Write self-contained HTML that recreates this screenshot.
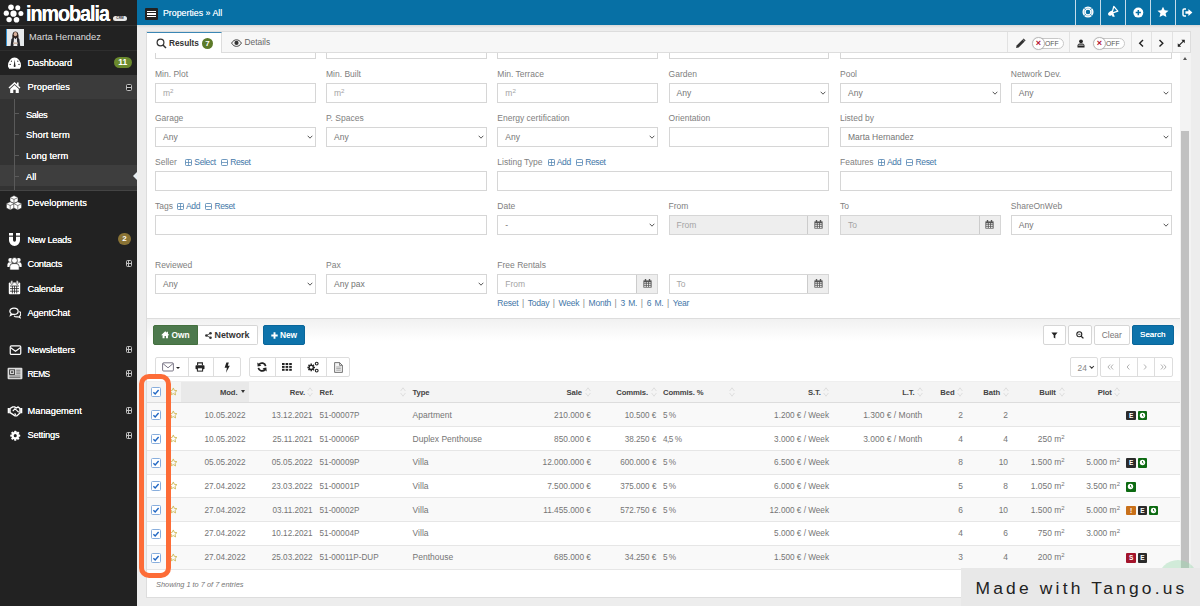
<!DOCTYPE html>
<html><head><meta charset="utf-8">
<style>
*{box-sizing:border-box;margin:0;padding:0}
html,body{width:1200px;height:606px;overflow:hidden}
body{font-family:"Liberation Sans",sans-serif;font-size:9px;color:#666;background:#ededed;position:relative}
.abs{position:absolute}
#side{position:absolute;left:0;top:0;width:137px;height:606px;background:#222}
#top{position:absolute;left:137px;top:0;width:1063px;height:25px;background:#0770a5}
#panel{position:absolute;left:146px;top:31px;width:1045px;height:567px;background:#fff;border:1px solid #ddd}
#tabs{position:absolute;left:0;top:0;width:1043px;height:21px;background:#f7f7f7;border-bottom:1px solid #ddd}
.lbl{position:absolute;font-size:8.5px;color:#808080;white-space:nowrap;line-height:10px}
.inp{position:absolute;height:20px;border:1px solid #d6d6d6;background:#fff;font-size:8.5px;color:#747474;line-height:18px;padding-left:7px;white-space:nowrap}
.inp.ph{color:#a4a4a4}
.inp.dis{background:#eee}
a,.lnk{color:#3f77a8;text-decoration:none;letter-spacing:-.25px}

.mi{position:absolute;left:0;width:137px;height:24px;color:#fff;font-size:9.3px;line-height:25px;white-space:nowrap}
.mi .t{position:absolute;left:27.5px;top:0;text-shadow:0 0 .4px #fff}
.mi svg{position:absolute}
.sub{position:absolute;left:26px;color:#fff;font-size:9.4px;line-height:12px;white-space:nowrap;text-shadow:0 0 .4px #fff}
.tick{position:absolute;left:14px;width:5px;height:1px;background:#5a5a5a}
.exp{position:absolute;left:125.5px;width:6.4px;height:6.4px;border:1px solid #c0c0c0;border-radius:1.5px;background:#222;margin-top:.4px}
.exp:before{content:"";position:absolute;left:0;top:1.7px;width:4.4px;height:1px;background:#c0c0c0}
.exp.plus:after{content:"";position:absolute;left:1.7px;top:0;width:1px;height:4.4px;background:#c0c0c0}

.tsep{top:0;width:1px;height:25px;background:#c4dcea;box-shadow:0 0 .5px #c4dcea}
.tab{position:absolute;top:0;height:21px;white-space:nowrap}
.tdiv{position:absolute;top:0;width:1px;height:20px;background:#e2e2e2}

.sw{top:5.7px;width:31px;height:11px;border:1px solid #c8c8c8;border-radius:6px;background:#fff}
.knob{top:4.7px;width:13px;height:13px;border:1px solid #bbb;border-radius:7px;background:#fff;box-shadow:0 0 1px rgba(0,0,0,.2)}
.knob:after{content:"×";position:absolute;left:0;top:0;width:11px;height:11px;text-align:center;line-height:10.5px;font-size:9px;font-weight:bold;color:#b01030}
.swt{top:5.7px;font-size:6.8px;line-height:11px;color:#555}

#form{position:absolute;left:0;top:0;width:1200px;height:606px}
.lbl sup,.inp sup{font-size:6.2px;line-height:0;vertical-align:3px}
.lk{color:#3f77a8;letter-spacing:-.36px}
.lk svg{margin-right:2px;vertical-align:-0.6px}
.lk i{display:inline-block;position:relative;width:6.5px;height:6.5px;border:1px solid #3f77a8;border-radius:1px;margin-right:2.5px;vertical-align:-0.5px}
.lk i:before{content:"";position:absolute;left:.75px;top:1.75px;width:3px;height:1px;background:#3f77a8}
.lk i.pl:after{content:"";position:absolute;left:1.75px;top:.75px;width:1px;height:3px;background:#3f77a8}
.chev{position:absolute;right:2px;top:6.9px}
.cal{position:absolute;right:0;top:0;width:21px;height:18px;background:#eee;border-left:1px solid #ccc;text-align:center;line-height:17px}
.cal svg{vertical-align:middle}

.btn{position:absolute;border:1px solid #d6d6d6;border-radius:2px;font-size:8.4px;line-height:18px;text-align:center;white-space:nowrap;display:flex;align-items:center;justify-content:center}
.grp{position:absolute;border:1px solid #ddd;border-radius:2px;background:#fff}
.gd{position:absolute;top:358px;width:1px;height:17.5px;background:#ddd}
.th{position:absolute;font-size:7.7px;letter-spacing:-.1px;line-height:11px;font-weight:bold;color:#444;white-space:nowrap}
.td{position:absolute;font-size:8.6px;line-height:11px;color:#757575;white-space:nowrap}
.td sup{font-size:6px;line-height:0;vertical-align:3px}
.cb{position:absolute;left:151px;width:10px;height:10px;border:1px solid #88aedd;border-radius:1.5px;background:#fff}
.cb svg{position:absolute;left:0;top:0}
.tg{position:absolute;width:9.5px;height:9.5px;border-radius:1px;color:#fff;font-size:6.5px;font-weight:bold;line-height:9px;text-align:center}
</style></head><body>

<div id="side">
 <!-- logo -->
 <svg class="abs" style="left:3px;top:4px" width="21" height="19" viewBox="0 0 21 19"><g fill="#fff"><circle cx="8" cy="3.2" r="2.8"/><circle cx="14.8" cy="3.7" r="2.5"/><circle cx="3.3" cy="9.2" r="2.6"/><circle cx="10.5" cy="9.7" r="3.1"/><circle cx="17.9" cy="9.5" r="2.5"/><circle cx="6.1" cy="15.6" r="2.7"/><circle cx="13.5" cy="15.8" r="2.8"/></g></svg>
 <div class="abs" style="left:26px;top:1.9px;font-size:22.5px;line-height:23px;font-weight:bold;color:#fff;letter-spacing:-1.2px;transform:scaleX(.88);transform-origin:0 0;text-shadow:0 0 .6px #fff">inmobalia</div>
 <div class="abs" style="left:113px;top:15.5px;width:14px;height:5px;border-radius:2.5px;background:#e8e8e8;color:#333;font-size:3.2px;line-height:5px;text-align:center;font-weight:bold">CRM</div>
 <div class="abs" style="left:0;top:25px;width:137px;height:1px;background:#333"></div>
 <!-- user -->
 <div class="abs" style="left:6px;top:29px;width:18px;height:17px;background:#e6e9eb;border-left:1.6px solid #2f8fcf;overflow:hidden">
   <svg class="abs" style="left:0;top:0" width="17" height="17" viewBox="0 0 17 17"><path d="M5.4 9.5C5 6 5.6 2.6 8.4 2.6S11.8 6 11.4 9.5Z" fill="#2e211c"/><ellipse cx="8.4" cy="5.2" rx="1.7" ry="2.1" fill="#d8b09a"/><path d="M3.6 17L4.4 10.4C4.8 8.8 6.4 8.4 8.4 8.4S12 8.8 12.4 10.4L13.2 17Z" fill="#26262b"/><path d="M7 8.6L8.4 10.2L9.8 8.6L10.4 17H6.4Z" fill="#ececec"/><rect x="6.2" y="13.4" width="4.4" height="1.6" fill="#cdb7a8"/></svg>
 </div>
 <div class="abs" style="left:29px;top:31px;color:#ddd;font-size:9.3px;line-height:12px;white-space:nowrap">Marta Hernandez</div>
 <div class="abs" style="left:0;top:50px;width:137px;height:1px;background:#2e2e2e"></div>
 <!-- properties block -->
 <div class="abs" style="left:0;top:75px;width:137px;height:24px;background:#3b3b3b"></div>
 <div class="abs" style="left:0;top:99px;width:137px;height:92px;background:#333"></div>
 <div class="abs" style="left:0;top:165px;width:137px;height:21px;background:#3e3e3e"></div>
 <div class="abs" style="left:14px;top:99px;width:1px;height:91px;background:#5a5a5a"></div>
 <div class="abs" style="left:0;top:190px;width:137px;height:1px;background:#444"></div>
 <div class="tick" style="top:113px"></div><div class="tick" style="top:134px"></div><div class="tick" style="top:155px"></div><div class="tick" style="top:176px"></div>
 <div class="sub" style="top:108.8px;letter-spacing:-.45px">Sales</div>
 <div class="sub" style="top:129px">Short term</div>
 <div class="sub" style="top:149.8px">Long term</div>
 <div class="sub" style="top:170.6px">All</div>
 <div class="abs" style="left:133px;top:172px;width:0;height:0;border-top:4px solid transparent;border-bottom:4px solid transparent;border-right:4px solid #e8eef2"></div>

 <div class="mi" style="top:51px"><span class="t" style="letter-spacing:-0.1px">Dashboard</span></div>
 <div class="abs" style="left:114px;top:57px;width:17.5px;height:11px;border-radius:5.5px;background:#6b8a2e;color:#fff;font-size:8.5px;font-weight:bold;line-height:11px;text-align:center">11</div>
 <div class="mi" style="top:75px"><span class="t">Properties</span></div>
 <div class="exp" style="top:84px"></div>
 <div class="mi" style="top:191px"><span class="t">Developments</span></div>
 <div class="mi" style="top:227.5px"><span class="t" style="letter-spacing:-0.3px">New Leads</span></div>
 <div class="abs" style="left:118px;top:233px;width:13px;height:12px;border-radius:6px;background:#8a7335;color:#fff;font-size:8px;font-weight:bold;line-height:12px;text-align:center">2</div>
 <div class="mi" style="top:252px"><span class="t" style="letter-spacing:-0.27px">Contacts</span></div>
 <div class="exp plus" style="top:260px"></div>
 <div class="mi" style="top:277px"><span class="t" style="letter-spacing:-0.22px">Calendar</span></div>
 <div class="mi" style="top:301px"><span class="t" style="letter-spacing:-0.16px">AgentChat</span></div>
 <div class="mi" style="top:338px"><span class="t" style="letter-spacing:-0.1px">Newsletters</span></div>
 <div class="exp plus" style="top:346px"></div>
 <div class="mi" style="top:362px"><span class="t" style="letter-spacing:-0.5px;font-size:8.4px">REMS</span></div>
 <div class="exp plus" style="top:370px"></div>
 <div class="mi" style="top:399px"><span class="t">Management</span></div>
 <div class="exp plus" style="top:407px"></div>
 <div class="mi" style="top:423px"><span class="t" style="letter-spacing:-0.22px">Settings</span></div>
 <div class="exp plus" style="top:432px"></div>

 <!-- dashboard -->
 <svg class="abs" style="left:7px;top:56px" width="15" height="14" viewBox="0 0 15 14"><path d="M1 9.6A6.5 8 0 0 1 14 9.6V10.6L12.8 12.8H2.2L1 10.6Z" fill="#fff"/><path d="M7.7 3.6L8.4 9.6H6.8Z" fill="#222"/><circle cx="7.6" cy="10" r="1" fill="#222"/><circle cx="3.2" cy="8.4" r=".65" fill="#222"/><circle cx="12" cy="8.4" r=".65" fill="#222"/><circle cx="4.4" cy="5.2" r=".6" fill="#222"/><circle cx="10.8" cy="5.2" r=".6" fill="#222"/></svg>
 <!-- home -->
 <svg class="abs" style="left:8px;top:81px" width="13" height="13" viewBox="0 0 13 13"><path d="M6.5 1L0.5 6.6L1.5 7.6L6.5 3L11.5 7.6L12.5 6.6L10.6 4.8V1.6H9V3.3Z" fill="#fff"/><path d="M6.5 4L2.2 7.9V12H5.3V8.8H7.7V12H10.8V7.9Z" fill="#fff"/></svg>
 <!-- developments cubes -->
 <svg class="abs" style="left:6px;top:195px" width="16" height="16" viewBox="0 0 16 16"><g fill="#fff" stroke="#222" stroke-width=".5"><path d="M8 .6L12 2.4V6.6L8 8.4L4 6.6V2.4Z"/><path d="M4.2 6.8L8.2 8.6V13L4.2 15L.4 13V8.6Z"/><path d="M11.8 6.8L15.6 8.6V13L11.8 15L7.8 13V8.6Z"/></g><g stroke="#222" stroke-width=".55" fill="none"><path d="M4.4 2.8L8 4.4L11.6 2.8M8 4.4V8"/><path d="M.8 8.9L4.2 10.5L7.8 8.9M4.2 10.5V14.6"/><path d="M8.2 8.9L11.8 10.5L15.2 8.9M11.8 10.5V14.6"/></g></svg>
 <!-- magnet -->
 <svg class="abs" style="left:8px;top:232px" width="13" height="15" viewBox="0 0 13 15"><path d="M1 1H5V8A1.5 1.8 0 0 0 8 8V1H12V8.2A5.5 5.8 0 0 1 1 8.2Z" fill="#fff"/><rect x="1" y="3.6" width="4" height="1.1" fill="#222"/><rect x="8" y="3.6" width="4" height="1.1" fill="#222"/></svg>
 <!-- contacts -->
 <svg class="abs" style="left:7px;top:256px" width="15" height="15" viewBox="0 0 15 15"><g fill="#fff"><circle cx="3.4" cy="4" r="2.1"/><circle cx="11.6" cy="4" r="2.1"/><path d="M0.4 11V8.4A2.4 2.4 0 0 1 2.8 6.2H5L4 11Z"/><path d="M14.6 11V8.4A2.4 2.4 0 0 0 12.2 6.2H10L11 11Z"/></g><circle cx="7.5" cy="4.4" r="2.9" fill="#fff" stroke="#222" stroke-width=".7"/><path d="M2.8 14V10.4A3 3 0 0 1 5.8 7.6H9.2A3 3 0 0 1 12.2 10.4V14Z" fill="#fff" stroke="#222" stroke-width=".7"/></svg>
 <!-- calendar -->
 <svg class="abs" style="left:8px;top:280px" width="13" height="15" viewBox="0 0 13 15"><rect x=".8" y="2.6" width="11.4" height="11.6" rx="1" fill="#fff"/><rect x="2.8" y=".6" width="2" height="3.8" rx="1" fill="#fff" stroke="#222" stroke-width=".6"/><rect x="8.2" y=".6" width="2" height="3.8" rx="1" fill="#fff" stroke="#222" stroke-width=".6"/><g stroke="#222" stroke-width=".8"><path d="M2 6H11M2 8.6H11M2 11.2H11M4.4 6V13.4M6.5 6V13.4M8.7 6V13.4"/></g></svg>
 <!-- chat -->
 <svg class="abs" style="left:8.5px;top:307px" width="12.5" height="11.7" viewBox="0 0 15 14"><path d="M6 1.2C9 1.2 11 2.8 11 5C11 7.2 9 8.8 6 8.8C5.4 8.8 4.9 8.7 4.4 8.6L1.8 10L2.6 7.8C1.6 7.1 1 6.1 1 5C1 2.8 3 1.2 6 1.2Z" fill="none" stroke="#fff" stroke-width="1.5"/><path d="M12.4 5.4C13.6 6.1 14.2 7 14.2 8.2C14.2 9.3 13.6 10.2 12.7 10.9L13.4 12.9L11 11.7C10.5 11.8 10 11.9 9.4 11.9C8 11.9 6.8 11.5 6 10.6" fill="none" stroke="#fff" stroke-width="1.4"/></svg>
 <!-- envelope -->
 <svg class="abs" style="left:8.5px;top:345px" width="13" height="10.5" viewBox="0 0 15 13"><rect x="1" y="1.2" width="13" height="10.4" rx="1.4" fill="none" stroke="#fff" stroke-width="1.5"/><path d="M1.6 3.4L7.5 7.8L13.4 3.4" fill="none" stroke="#fff" stroke-width="1.4"/></svg>
 <!-- rems -->
 <svg class="abs" style="left:7px;top:367px" width="16" height="13" viewBox="0 0 16 13"><rect x=".6" y=".8" width="14.8" height="11.4" rx="1" fill="#ddd"/><rect x="2.6" y="2.8" width="5" height="4.6" fill="none" stroke="#333" stroke-width=".9"/><rect x="4" y="4.2" width="2.2" height="1.8" fill="#555"/><path d="M9.2 3.2H13.4M9.2 5H13.4M9.2 6.8H13.4M2.4 9H13.4M2.4 10.6H13.4" stroke="#555" stroke-width=".8"/></svg>
 <!-- handshake -->
 <svg class="abs" style="left:7px;top:404px" width="16" height="13.5" viewBox="0 0 17 15"><path d="M.4 4.4H2.6V10.4H.4ZM14.4 4.4H16.6V10.4H14.4Z" fill="#fff"/><path d="M3 5L6 3.2H8L10 4.4L12 3.2L14 5V10L10.6 13.2H8.6L3 9.6Z" fill="none" stroke="#fff" stroke-width="1.5" stroke-linejoin="round"/><path d="M6 8L8.4 5.4L10.8 7.4L12.6 9.2M8 10.6L9.6 12" fill="none" stroke="#fff" stroke-width="1.3"/></svg>
 <!-- gear -->
 <svg class="abs" style="left:10px;top:430px" width="10.5" height="11.3" viewBox="-6.5 -7 13 14"><g fill="#fff"><circle r="4.4"/><g id="gt"><rect x="-1.4" y="-6.2" width="2.8" height="12.4" rx=".6"/></g><use href="#gt" transform="rotate(45)"/><use href="#gt" transform="rotate(90)"/><use href="#gt" transform="rotate(135)"/></g><circle r="1.9" fill="#222"/></svg>

</div>

<div id="top">
 <div class="abs" style="left:7.5px;top:8px;width:13px;height:12px;background:#222;border-radius:1px"></div>
 <div class="abs" style="left:9.5px;top:10.5px;width:9px;height:1.6px;background:#fff"></div>
 <div class="abs" style="left:9.5px;top:13.2px;width:9px;height:1.6px;background:#fff"></div>
 <div class="abs" style="left:9.5px;top:15.9px;width:9px;height:1.6px;background:#fff"></div>
 <div class="abs" style="left:26px;top:7px;font-size:8.8px;line-height:12px;color:#e6f2fa;white-space:nowrap;text-shadow:0 0 .4px #e6f2fa">Properties » All</div>
 <!-- right icons -->
 <div class="abs tsep" style="left:938px"></div><div class="abs tsep" style="left:963px"></div><div class="abs tsep" style="left:988px"></div><div class="abs tsep" style="left:1013px"></div><div class="abs tsep" style="left:1038px"></div>
 <svg class="abs" style="left:945px;top:6px" width="12" height="12" viewBox="0 0 12 12"><circle cx="6" cy="6" r="3.9" fill="none" stroke="#fff" stroke-width="3.3"/><circle cx="6" cy="6" r="3.9" fill="none" stroke="#0770a5" stroke-width=".5" opacity=".7"/><g stroke="#0770a5" stroke-width=".7" opacity=".8"><path d="M2 2L4.2 4.2M10 2L7.8 4.2M2 10L4.2 7.8M10 10L7.8 7.8"/></g></svg>
 <svg class="abs" style="left:970px;top:5px" width="13" height="13" viewBox="0 0 13 13"><path d="M6.8 1.4L10.8 6.2L5 8.2Z" fill="none" stroke="#fff" stroke-width="1.3" stroke-linejoin="round"/><path d="M4.6 5.4L6.6 8.8L4.2 10.4C3 11.1 1.6 10.8 1.2 9.7C.8 8.6 1.4 7.6 2.6 6.8Z" fill="#fff"/><path d="M4.4 9L5.6 11.8H7.8L6.6 8.6Z" fill="#fff"/></svg>
 <svg class="abs" style="left:995px;top:6.5px" width="12" height="12" viewBox="0 0 12 12"><circle cx="6.3" cy="5.6" r="5" fill="#fff"/><path d="M6.3 3V8.2M3.7 5.6H8.9" stroke="#0770a5" stroke-width="1.5"/></svg>
 <svg class="abs" style="left:1020px;top:6px" width="12" height="12" viewBox="0 0 13 13"><path d="M6.5 .8L8.3 4.7L12.5 5.1L9.3 7.9L10.2 12L6.5 9.9L2.8 12L3.7 7.9L.5 5.1L4.7 4.7Z" fill="#fff"/></svg>
 <svg class="abs" style="left:1045px;top:8px" width="11" height="9" viewBox="0 0 11 9"><path d="M4 1H2.2A1.2 1.2 0 0 0 1 2.2V6.8A1.2 1.2 0 0 0 2.2 8H4" fill="none" stroke="#fff" stroke-width="1.5"/><path d="M3.4 3.2H6.4V1L10.4 4.5L6.4 8V5.8H3.4Z" fill="#fff"/></svg>
</div>
<div class="abs" style="left:137px;top:25px;width:1063px;height:3px;background:linear-gradient(#d8d8d8,#ededed)"></div>
<div id="panel"></div>
<div id="form">
<div class="inp " style="left:155px;top:39px;width:160.8px"></div>
<div class="inp " style="left:326px;top:39px;width:160.8px"></div>
<div class="inp " style="left:497.3px;top:39px;width:160.8px"></div>
<div class="inp " style="left:668.6px;top:39px;width:160.8px"></div>
<div class="inp " style="left:840px;top:39px;width:331.6px"></div>
<div class="lbl" style="left:155px;top:69px">Min. Plot</div>
<div class="lbl" style="left:326px;top:69px">Min. Built</div>
<div class="lbl" style="left:497.3px;top:69px">Min. Terrace</div>
<div class="lbl" style="left:668.6px;top:69px">Garden</div>
<div class="lbl" style="left:840px;top:69px">Pool</div>
<div class="lbl" style="left:1010.8px;top:69px">Network Dev.</div>
<div class="inp ph" style="left:155px;top:83px;width:160.8px">m<sup>2</sup></div>
<div class="inp ph" style="left:326px;top:83px;width:160.8px">m<sup>2</sup></div>
<div class="inp ph" style="left:497.3px;top:83px;width:160.8px">m<sup>2</sup></div>
<div class="inp " style="left:668.6px;top:83px;width:160.8px">Any<svg class="chev" width="6" height="4.3" viewBox="0 0 7 5"><path d="M.8 .9L3.5 3.7L6.2 .9" fill="none" stroke="#444" stroke-width="1.05"/></svg></div>
<div class="inp " style="left:840px;top:83px;width:160.8px">Any<svg class="chev" width="6" height="4.3" viewBox="0 0 7 5"><path d="M.8 .9L3.5 3.7L6.2 .9" fill="none" stroke="#444" stroke-width="1.05"/></svg></div>
<div class="inp " style="left:1010.8px;top:83px;width:160.8px">Any<svg class="chev" width="6" height="4.3" viewBox="0 0 7 5"><path d="M.8 .9L3.5 3.7L6.2 .9" fill="none" stroke="#444" stroke-width="1.05"/></svg></div>
<div class="lbl" style="left:155px;top:113px">Garage</div>
<div class="lbl" style="left:326px;top:113px">P. Spaces</div>
<div class="lbl" style="left:497.3px;top:113px">Energy certification</div>
<div class="lbl" style="left:668.6px;top:113px">Orientation</div>
<div class="lbl" style="left:840px;top:113px">Listed by</div>
<div class="inp " style="left:155px;top:127px;width:160.8px">Any<svg class="chev" width="6" height="4.3" viewBox="0 0 7 5"><path d="M.8 .9L3.5 3.7L6.2 .9" fill="none" stroke="#444" stroke-width="1.05"/></svg></div>
<div class="inp " style="left:326px;top:127px;width:160.8px">Any<svg class="chev" width="6" height="4.3" viewBox="0 0 7 5"><path d="M.8 .9L3.5 3.7L6.2 .9" fill="none" stroke="#444" stroke-width="1.05"/></svg></div>
<div class="inp " style="left:497.3px;top:127px;width:160.8px">Any<svg class="chev" width="6" height="4.3" viewBox="0 0 7 5"><path d="M.8 .9L3.5 3.7L6.2 .9" fill="none" stroke="#444" stroke-width="1.05"/></svg></div>
<div class="inp " style="left:668.6px;top:127px;width:160.8px"></div>
<div class="inp " style="left:840px;top:127px;width:331.6px">Marta Hernandez<svg class="chev" width="6" height="4.3" viewBox="0 0 7 5"><path d="M.8 .9L3.5 3.7L6.2 .9" fill="none" stroke="#444" stroke-width="1.05"/></svg></div>
<div class="lbl" style="left:155px;top:157px">Seller<span class="lk" style="margin-left:8.6px"><svg width="7" height="7" viewBox="0 0 7 7"><rect x=".5" y=".5" width="6" height="6" rx=".8" fill="none" stroke="#5587b3" stroke-width=".85"/><path d="M.8 3.5H6.2" stroke="#5587b3" stroke-width=".75"/><path d="M3.5 .8V6.2" stroke="#5587b3" stroke-width=".75"/></svg>Select</span><span class="lk" style="margin-left:5.4px"><svg width="7" height="7" viewBox="0 0 7 7"><rect x=".5" y=".5" width="6" height="6" rx=".8" fill="none" stroke="#5587b3" stroke-width=".85"/><path d="M.8 3.5H6.2" stroke="#5587b3" stroke-width=".75"/></svg>Reset</span></div>
<div class="lbl" style="left:497.3px;top:157px">Listing Type<span class="lk" style="margin-left:5.2px"><svg width="7" height="7" viewBox="0 0 7 7"><rect x=".5" y=".5" width="6" height="6" rx=".8" fill="none" stroke="#5587b3" stroke-width=".85"/><path d="M.8 3.5H6.2" stroke="#5587b3" stroke-width=".75"/><path d="M3.5 .8V6.2" stroke="#5587b3" stroke-width=".75"/></svg>Add</span><span class="lk" style="margin-left:5.4px"><svg width="7" height="7" viewBox="0 0 7 7"><rect x=".5" y=".5" width="6" height="6" rx=".8" fill="none" stroke="#5587b3" stroke-width=".85"/><path d="M.8 3.5H6.2" stroke="#5587b3" stroke-width=".75"/></svg>Reset</span></div>
<div class="lbl" style="left:840px;top:157px">Features<span class="lk" style="margin-left:4.5px"><svg width="7" height="7" viewBox="0 0 7 7"><rect x=".5" y=".5" width="6" height="6" rx=".8" fill="none" stroke="#5587b3" stroke-width=".85"/><path d="M.8 3.5H6.2" stroke="#5587b3" stroke-width=".75"/><path d="M3.5 .8V6.2" stroke="#5587b3" stroke-width=".75"/></svg>Add</span><span class="lk" style="margin-left:5.4px"><svg width="7" height="7" viewBox="0 0 7 7"><rect x=".5" y=".5" width="6" height="6" rx=".8" fill="none" stroke="#5587b3" stroke-width=".85"/><path d="M.8 3.5H6.2" stroke="#5587b3" stroke-width=".75"/></svg>Reset</span></div>
<div class="inp " style="left:155px;top:171px;width:331.8px"></div>
<div class="inp " style="left:497.3px;top:171px;width:332.1px"></div>
<div class="inp " style="left:840px;top:171px;width:331.6px"></div>
<div class="lbl" style="left:155px;top:201px">Tags<span class="lk" style="margin-left:4px"><svg width="7" height="7" viewBox="0 0 7 7"><rect x=".5" y=".5" width="6" height="6" rx=".8" fill="none" stroke="#5587b3" stroke-width=".85"/><path d="M.8 3.5H6.2" stroke="#5587b3" stroke-width=".75"/><path d="M3.5 .8V6.2" stroke="#5587b3" stroke-width=".75"/></svg>Add</span><span class="lk" style="margin-left:5.4px"><svg width="7" height="7" viewBox="0 0 7 7"><rect x=".5" y=".5" width="6" height="6" rx=".8" fill="none" stroke="#5587b3" stroke-width=".85"/><path d="M.8 3.5H6.2" stroke="#5587b3" stroke-width=".75"/></svg>Reset</span></div>
<div class="lbl" style="left:497.3px;top:201px">Date</div>
<div class="lbl" style="left:668.6px;top:201px">From</div>
<div class="lbl" style="left:840px;top:201px">To</div>
<div class="lbl" style="left:1010.8px;top:201px">ShareOnWeb</div>
<div class="inp " style="left:155px;top:215px;width:331.8px"></div>
<div class="inp " style="left:497.3px;top:215px;width:160.8px">-<svg class="chev" width="6" height="4.3" viewBox="0 0 7 5"><path d="M.8 .9L3.5 3.7L6.2 .9" fill="none" stroke="#444" stroke-width="1.05"/></svg></div>
<div class="inp ph dis" style="left:668.6px;top:215px;width:160.8px">From<span class="cal"><svg width="9" height="9" viewBox="0 0 9 9"><rect x=".4" y="1.4" width="8.2" height="7.2" fill="#555"/><rect x="1.8" y="0" width="1.4" height="2.4" fill="#555"/><rect x="5.8" y="0" width="1.4" height="2.4" fill="#555"/><g fill="#eee"><rect x="1.3" y="3.2" width="1.5" height="1.2"/><rect x="3.7" y="3.2" width="1.5" height="1.2"/><rect x="6.1" y="3.2" width="1.5" height="1.2"/><rect x="1.3" y="5" width="1.5" height="1.2"/><rect x="3.7" y="5" width="1.5" height="1.2"/><rect x="6.1" y="5" width="1.5" height="1.2"/><rect x="1.3" y="6.8" width="1.5" height="1.2"/><rect x="3.7" y="6.8" width="1.5" height="1.2"/><rect x="6.1" y="6.8" width="1.5" height="1.2"/></g></svg></span></div>
<div class="inp ph dis" style="left:840px;top:215px;width:160.8px">To<span class="cal"><svg width="9" height="9" viewBox="0 0 9 9"><rect x=".4" y="1.4" width="8.2" height="7.2" fill="#555"/><rect x="1.8" y="0" width="1.4" height="2.4" fill="#555"/><rect x="5.8" y="0" width="1.4" height="2.4" fill="#555"/><g fill="#eee"><rect x="1.3" y="3.2" width="1.5" height="1.2"/><rect x="3.7" y="3.2" width="1.5" height="1.2"/><rect x="6.1" y="3.2" width="1.5" height="1.2"/><rect x="1.3" y="5" width="1.5" height="1.2"/><rect x="3.7" y="5" width="1.5" height="1.2"/><rect x="6.1" y="5" width="1.5" height="1.2"/><rect x="1.3" y="6.8" width="1.5" height="1.2"/><rect x="3.7" y="6.8" width="1.5" height="1.2"/><rect x="6.1" y="6.8" width="1.5" height="1.2"/></g></svg></span></div>
<div class="inp " style="left:1010.8px;top:215px;width:160.8px">Any<svg class="chev" width="6" height="4.3" viewBox="0 0 7 5"><path d="M.8 .9L3.5 3.7L6.2 .9" fill="none" stroke="#444" stroke-width="1.05"/></svg></div>
<div class="lbl" style="left:155px;top:260px">Reviewed</div>
<div class="lbl" style="left:326px;top:260px">Pax</div>
<div class="lbl" style="left:497.3px;top:260px">Free Rentals</div>
<div class="inp " style="left:155px;top:274px;width:160.8px">Any<svg class="chev" width="6" height="4.3" viewBox="0 0 7 5"><path d="M.8 .9L3.5 3.7L6.2 .9" fill="none" stroke="#444" stroke-width="1.05"/></svg></div>
<div class="inp " style="left:326px;top:274px;width:160.8px">Any pax<svg class="chev" width="6" height="4.3" viewBox="0 0 7 5"><path d="M.8 .9L3.5 3.7L6.2 .9" fill="none" stroke="#444" stroke-width="1.05"/></svg></div>
<div class="inp ph" style="left:497.3px;top:274px;width:160.8px">From<span class="cal"><svg width="9" height="9" viewBox="0 0 9 9"><rect x=".4" y="1.4" width="8.2" height="7.2" fill="#555"/><rect x="1.8" y="0" width="1.4" height="2.4" fill="#555"/><rect x="5.8" y="0" width="1.4" height="2.4" fill="#555"/><g fill="#eee"><rect x="1.3" y="3.2" width="1.5" height="1.2"/><rect x="3.7" y="3.2" width="1.5" height="1.2"/><rect x="6.1" y="3.2" width="1.5" height="1.2"/><rect x="1.3" y="5" width="1.5" height="1.2"/><rect x="3.7" y="5" width="1.5" height="1.2"/><rect x="6.1" y="5" width="1.5" height="1.2"/><rect x="1.3" y="6.8" width="1.5" height="1.2"/><rect x="3.7" y="6.8" width="1.5" height="1.2"/><rect x="6.1" y="6.8" width="1.5" height="1.2"/></g></svg></span></div>
<div class="inp ph" style="left:668.6px;top:274px;width:160.8px">To<span class="cal"><svg width="9" height="9" viewBox="0 0 9 9"><rect x=".4" y="1.4" width="8.2" height="7.2" fill="#555"/><rect x="1.8" y="0" width="1.4" height="2.4" fill="#555"/><rect x="5.8" y="0" width="1.4" height="2.4" fill="#555"/><g fill="#eee"><rect x="1.3" y="3.2" width="1.5" height="1.2"/><rect x="3.7" y="3.2" width="1.5" height="1.2"/><rect x="6.1" y="3.2" width="1.5" height="1.2"/><rect x="1.3" y="5" width="1.5" height="1.2"/><rect x="3.7" y="5" width="1.5" height="1.2"/><rect x="6.1" y="5" width="1.5" height="1.2"/><rect x="1.3" y="6.8" width="1.5" height="1.2"/><rect x="3.7" y="6.8" width="1.5" height="1.2"/><rect x="6.1" y="6.8" width="1.5" height="1.2"/></g></svg></span></div>
<div class="lbl" style="left:497.3px;top:298px;color:#888;word-spacing:1.25px"><span class="lnk">Reset</span> | <span class="lnk">Today</span> | <span class="lnk">Week</span> | <span class="lnk">Month</span> | <span class="lnk">3 M.</span> | <span class="lnk">6 M.</span> | <span class="lnk">Year</span></div>

<div class="abs" style="left:147px;top:318px;width:1034px;height:1px;background:#ddd"></div>
<div class="abs" style="left:147px;top:319px;width:1034px;height:22px;background:linear-gradient(#f1f1f1,#fff)"></div>
<div class="btn" style="left:153px;top:325px;width:45px;height:20px;background:#4d794d;border-color:#44703f;color:#fff;font-weight:bold;border-radius:2px 0 0 2px"><svg width="8.5" height="7.5" viewBox="0 0 13 12" style="margin-right:1.8px"><path d="M6.5 .4L.2 6.2L1.2 7.2L2.2 6.4V11.6H5.4V8H7.6V11.6H10.8V6.4L11.8 7.2L12.8 6.2L10.8 4.4V1.2H9V2.7Z" fill="#fff"/></svg>Own</div>
<div class="btn" style="left:198px;top:325px;width:60px;height:20px;background:#fff;color:#333;font-weight:bold;border-radius:0 2px 2px 0;border-left:none;font-size:8.9px"><svg width="7" height="7" viewBox="0 0 7 7" style="margin-right:2px"><circle cx="1.4" cy="3.5" r="1.3" fill="#333"/><circle cx="5.5" cy="1.3" r="1.3" fill="#333"/><circle cx="5.5" cy="5.7" r="1.3" fill="#333"/><path d="M1.4 3.5L5.5 1.3M1.4 3.5L5.5 5.7" stroke="#333" stroke-width=".8"/></svg>Network</div>
<div class="btn" style="left:263px;top:325px;width:42px;height:20px;background:#0d73ab;border-color:#0a669a;color:#fff;font-weight:bold"><svg width="7" height="7" viewBox="0 0 7 7" style="margin-right:2px"><path d="M3.5 .3V6.7M.3 3.5H6.7" stroke="#fff" stroke-width="1.9"/></svg>New</div>
<div class="btn" style="left:1043px;top:325px;width:23px;height:20px;background:#fff"><svg width="7" height="7" viewBox="0 0 7 7"><path d="M.4 .6H6.6L4.3 3.2V6.4L2.7 5.6V3.2Z" fill="#222"/></svg></div>
<div class="btn" style="left:1068px;top:325px;width:24px;height:20px;background:#fff"><svg width="8" height="8" viewBox="0 0 8 8"><circle cx="3.3" cy="3.3" r="2.5" fill="none" stroke="#222" stroke-width="1.1"/><path d="M5.2 5.2L7.4 7.4" stroke="#222" stroke-width="1.3"/><path d="M2.2 3.3H4.4" stroke="#222" stroke-width=".8"/></svg></div>
<div class="btn" style="left:1094px;top:325px;width:35.5px;height:20px;background:#fff;color:#777;font-size:8.4px">Clear</div>
<div class="btn" style="left:1132px;top:325px;width:41.5px;height:20px;background:#0d73ab;border-color:#0a669a;color:#fff;font-size:8px;text-shadow:0 0 .4px #fff">Search</div>
<div class="grp" style="left:154.5px;top:357px;width:86.5px;height:19.5px"></div>
<div class="gd" style="left:187.5px"></div><div class="gd" style="left:212.5px"></div>
<svg class="abs" style="left:162px;top:362px" width="12" height="10" viewBox="0 0 12 10"><rect x=".6" y=".8" width="10.8" height="8.2" rx="1" fill="none" stroke="#5a566a" stroke-width=".8"/><path d="M1 1.6L6 5.8L11 1.6" fill="none" stroke="#5a566a" stroke-width=".8"/></svg>
<div class="abs" style="left:175.5px;top:366.5px;width:0;height:0;border-left:2.6px solid transparent;border-right:2.6px solid transparent;border-top:2.8px solid #222"></div>
<svg class="abs" style="left:195px;top:362px" width="10" height="10" viewBox="0 0 10 10"><path d="M2.6 3.2V.9H7.4V3.2" fill="none" stroke="#222" stroke-width="1.1"/><rect x=".5" y="3.2" width="9" height="4" rx=".8" fill="#222"/><rect x="2.4" y="5.8" width="5.2" height="3.3" fill="#fff" stroke="#222" stroke-width="1"/></svg>
<svg class="abs" style="left:224px;top:361.5px" width="6" height="11" viewBox="0 0 6 11"><path d="M2.4 .4H4.8L3.8 3.8H5.8L2 10.8L2.9 5.8H.6Z" fill="#222"/></svg>
<div class="grp" style="left:249.3px;top:357px;width:101.2px;height:19.5px"></div>
<div class="gd" style="left:274.5px"></div><div class="gd" style="left:299.5px"></div><div class="gd" style="left:325.5px"></div>
<svg class="abs" style="left:257px;top:362px" width="10" height="10" viewBox="0 0 10 10"><path d="M8.6 4.2A3.7 3.7 0 0 0 2 2.6" fill="none" stroke="#222" stroke-width="1.8"/><path d="M.3 .6L.6 4.4L4.4 3.8Z" fill="#222"/><path d="M1.4 5.8A3.7 3.7 0 0 0 8 7.4" fill="none" stroke="#222" stroke-width="1.8"/><path d="M9.7 9.4L9.4 5.6L5.6 6.2Z" fill="#222"/></svg>
<svg class="abs" style="left:282px;top:363px" width="10" height="8" viewBox="0 0 10 8"><g fill="#222"><rect x="0" y="0" width="2.6" height="2"/><rect x="3.6" y="0" width="2.6" height="2"/><rect x="7.2" y="0" width="2.6" height="2"/><rect x="0" y="2.9" width="2.6" height="2"/><rect x="3.6" y="2.9" width="2.6" height="2"/><rect x="7.2" y="2.9" width="2.6" height="2"/><rect x="0" y="5.8" width="2.6" height="2"/><rect x="3.6" y="5.8" width="2.6" height="2"/><rect x="7.2" y="5.8" width="2.6" height="2"/></g></svg>
<svg class="abs" style="left:307px;top:361px" width="12" height="12" viewBox="0 0 12 12"><g transform="translate(4.2 6.4)"><circle r="2.7" fill="#222"/><g stroke="#222" stroke-width="1.5"><path d="M0 -3.8V3.8M-3.8 0H3.8M-2.7 -2.7L2.7 2.7M-2.7 2.7L2.7 -2.7"/></g><circle r="1.4" fill="#fff"/></g><circle cx="9.7" cy="2.6" r="1.4" fill="#fff" stroke="#222" stroke-width="1.1"/><circle cx="9.7" cy="9.6" r="1.4" fill="#fff" stroke="#222" stroke-width="1.1"/></svg>
<svg class="abs" style="left:333.5px;top:361.5px" width="9" height="11" viewBox="0 0 9 11"><path d="M.6 .6H5.6L8.4 3.4V10.4H.6Z" fill="#f4f4f4" stroke="#666" stroke-width=".9"/><path d="M5.6 .6V3.4H8.4" fill="none" stroke="#666" stroke-width=".8"/><path d="M2.2 5H6.8M2.2 6.6H6.8M2.2 8.2H6.8" stroke="#888" stroke-width=".7"/></svg>
<div class="grp" style="left:1070.3px;top:357px;width:27.4px;height:19.5px"></div>
<div class="abs" style="left:1077.5px;top:362.5px;font-size:8.4px;line-height:11px;color:#888">24</div>
<svg class="abs" style="left:1089px;top:365px" width="5.5" height="4.5" viewBox="0 0 7 5"><path d="M.8 .9L3.5 3.7L6.2 .9" fill="none" stroke="#333" stroke-width="1.3"/></svg>
<div class="grp" style="left:1100.3px;top:357px;width:72.5px;height:19.5px"></div>
<div class="gd" style="left:1119px"></div><div class="gd" style="left:1136.5px"></div><div class="gd" style="left:1154px"></div>
<svg class="abs" style="left:1106.5px;top:364px" width="7" height="6" viewBox="0 0 8 7"><path d="M3.6 .6L1 3.5L3.6 6.4M7 .6L4.4 3.5L7 6.4" fill="none" stroke="#999" stroke-width=".9"/></svg>
<svg class="abs" style="left:1125.5px;top:364px" width="4.4" height="6" viewBox="0 0 5 7"><path d="M3.8 .6L1.2 3.5L3.8 6.4" fill="none" stroke="#999" stroke-width=".9"/></svg>
<svg class="abs" style="left:1143px;top:364px" width="4.4" height="6" viewBox="0 0 5 7"><path d="M1.2 .6L3.8 3.5L1.2 6.4" fill="none" stroke="#999" stroke-width=".9"/></svg>
<svg class="abs" style="left:1160px;top:364px" width="7" height="6" viewBox="0 0 8 7"><path d="M1 .6L3.6 3.5L1 6.4M4.4 .6L7 3.5L4.4 6.4" fill="none" stroke="#999" stroke-width=".9"/></svg>
<div class="abs" style="left:147px;top:381px;width:1033.3px;height:22px;background:#f4f4f4;border-top:1px solid #efefef;border-bottom:1px solid #ddd"></div>
<div class="abs" style="left:181px;top:382px;width:67.5px;height:20px;background:#e9e9e9"></div>
<div class="abs" style="left:147px;top:403px;width:1033.3px;height:24px;background:#f9f9f9;border-bottom:1px solid #e6e6e6"></div>
<div class="abs" style="left:147px;top:427px;width:1033.3px;height:23.5px;background:#fff;border-bottom:1px solid #e6e6e6"></div>
<div class="abs" style="left:147px;top:450.5px;width:1033.3px;height:24px;background:#f9f9f9;border-bottom:1px solid #e6e6e6"></div>
<div class="abs" style="left:147px;top:474.5px;width:1033.3px;height:23.5px;background:#fff;border-bottom:1px solid #e6e6e6"></div>
<div class="abs" style="left:147px;top:498px;width:1033.3px;height:24px;background:#f9f9f9;border-bottom:1px solid #e6e6e6"></div>
<div class="abs" style="left:147px;top:522px;width:1033.3px;height:23.5px;background:#fff;border-bottom:1px solid #e6e6e6"></div>
<div class="abs" style="left:147px;top:545.5px;width:1033.3px;height:24px;background:#f9f9f9;border-bottom:1px solid #e6e6e6"></div>
<div class="th" style="right:962.5px;top:387px">Mod.</div>
<div class="abs" style="left:240.6px;top:390.3px;width:0;height:0;border-left:2.9px solid transparent;border-right:2.9px solid transparent;border-top:3.3px solid #333"></div>
<div class="th" style="right:895px;top:387px">Rev.</div>
<svg class="abs" style="left:307px;top:387px" width="6" height="10" viewBox="0 0 6 10"><path d="M.6 4L3 .8L5.4 4M.6 6L3 9.2L5.4 6" fill="none" stroke="#d8d8d8" stroke-width=".8"/></svg>
<div class="th" style="left:319.5px;top:387px">Ref.</div>
<svg class="abs" style="left:400.3px;top:387px" width="6" height="10" viewBox="0 0 6 10"><path d="M.6 4L3 .8L5.4 4M.6 6L3 9.2L5.4 6" fill="none" stroke="#d8d8d8" stroke-width=".8"/></svg>
<div class="th" style="left:412.5px;top:387px">Type</div>
<div class="th" style="right:618px;top:387px">Sale</div>
<svg class="abs" style="left:585px;top:387px" width="6" height="10" viewBox="0 0 6 10"><path d="M.6 4L3 .8L5.4 4M.6 6L3 9.2L5.4 6" fill="none" stroke="#d8d8d8" stroke-width=".8"/></svg>
<div class="th" style="right:552px;top:387px">Commis.</div>
<svg class="abs" style="left:650.5px;top:387px" width="6" height="10" viewBox="0 0 6 10"><path d="M.6 4L3 .8L5.4 4M.6 6L3 9.2L5.4 6" fill="none" stroke="#d8d8d8" stroke-width=".8"/></svg>
<div class="th" style="left:663px;top:387px">Commis. %</div>
<svg class="abs" style="left:729px;top:387px" width="6" height="10" viewBox="0 0 6 10"><path d="M.6 4L3 .8L5.4 4M.6 6L3 9.2L5.4 6" fill="none" stroke="#d8d8d8" stroke-width=".8"/></svg>
<div class="th" style="right:379.20000000000005px;top:387px">S.T.</div>
<svg class="abs" style="left:823.3px;top:387px" width="6" height="10" viewBox="0 0 6 10"><path d="M.6 4L3 .8L5.4 4M.6 6L3 9.2L5.4 6" fill="none" stroke="#d8d8d8" stroke-width=".8"/></svg>
<div class="th" style="right:285.4px;top:387px">L.T.</div>
<svg class="abs" style="left:917px;top:387px" width="6" height="10" viewBox="0 0 6 10"><path d="M.6 4L3 .8L5.4 4M.6 6L3 9.2L5.4 6" fill="none" stroke="#d8d8d8" stroke-width=".8"/></svg>
<div class="th" style="right:245.5px;top:387px">Bed</div>
<svg class="abs" style="left:957.3px;top:387px" width="6" height="10" viewBox="0 0 6 10"><path d="M.6 4L3 .8L5.4 4M.6 6L3 9.2L5.4 6" fill="none" stroke="#d8d8d8" stroke-width=".8"/></svg>
<div class="th" style="right:200px;top:387px">Bath</div>
<svg class="abs" style="left:1003px;top:387px" width="6" height="10" viewBox="0 0 6 10"><path d="M.6 4L3 .8L5.4 4M.6 6L3 9.2L5.4 6" fill="none" stroke="#d8d8d8" stroke-width=".8"/></svg>
<div class="th" style="right:144.20000000000005px;top:387px">Built</div>
<svg class="abs" style="left:1058.5px;top:387px" width="6" height="10" viewBox="0 0 6 10"><path d="M.6 4L3 .8L5.4 4M.6 6L3 9.2L5.4 6" fill="none" stroke="#d8d8d8" stroke-width=".8"/></svg>
<div class="th" style="right:88.20000000000005px;top:387px">Plot</div>
<svg class="abs" style="left:1114px;top:387px" width="6" height="10" viewBox="0 0 6 10"><path d="M.6 4L3 .8L5.4 4M.6 6L3 9.2L5.4 6" fill="none" stroke="#d8d8d8" stroke-width=".8"/></svg>
<div class="cb" style="top:387px"><svg width="8" height="8" viewBox="0 0 8 8"><path d="M1.4 4.2L3.2 6L6.6 2" fill="none" stroke="#2268c4" stroke-width="1.4"/></svg></div>
<svg class="abs" style="left:169px;top:387px" width="8.6" height="9" viewBox="0 0 9 9"><path d="M4.5 .8L5.6 3.3L8.3 3.6L6.3 5.4L6.9 8.1L4.5 6.7L2.1 8.1L2.7 5.4L.7 3.6L3.4 3.3Z" fill="none" stroke="#cfb95c" stroke-width=".95"/></svg>
<div class="cb" style="top:410px"><svg width="8" height="8" viewBox="0 0 8 8"><path d="M1.4 4.2L3.2 6L6.6 2" fill="none" stroke="#2268c4" stroke-width="1.4"/></svg></div>
<svg class="abs" style="left:169px;top:410px" width="8.6" height="9" viewBox="0 0 9 9"><path d="M4.5 .8L5.6 3.3L8.3 3.6L6.3 5.4L6.9 8.1L4.5 6.7L2.1 8.1L2.7 5.4L.7 3.6L3.4 3.3Z" fill="none" stroke="#cfb95c" stroke-width=".95"/></svg>
<div class="td" style="right:954.5px;top:409.5px;font-size:8.2px">10.05.2022</div>
<div class="td" style="right:887.5px;top:409.5px;font-size:8.15px">13.12.2021</div>
<div class="td" style="left:319.6px;top:409.5px;font-size:8.15px">51-00007P</div>
<div class="td" style="left:412.6px;top:409.5px;font-size:8.5px">Apartment</div>
<div class="td" style="right:609.0px;top:409.5px;font-size:8.3px">210.000 €</div>
<div class="td" style="right:543.6px;top:409.5px;font-size:8.15px">10.500 €</div>
<div class="td" style="left:663px;top:409.5px;font-size:8.2px;letter-spacing:-.5px">5 %</div>
<div class="td" style="right:371.0px;top:409.5px;font-size:8.2px">1.200 € / Week</div>
<div class="td" style="right:277.8px;top:409.5px;font-size:8.5px">1.300 € / Month</div>
<div class="td" style="right:237.0px;top:409.5px;font-size:8.4px">2</div>
<div class="td" style="right:192.0px;top:409.5px;font-size:8.4px">2</div>
<div class="tg" style="left:1126.4px;top:410.7px;background:#2b2b2b">E</div>
<div class="tg" style="left:1137.6000000000001px;top:410.7px;background:#0d6b12"><svg width="9" height="9" viewBox="0 0 9 9" style="position:absolute;left:0;top:0"><circle cx="4.5" cy="4.5" r="2.7" fill="#fff"/><path d="M4.5 3V4.6L5.6 5.2" stroke="#0d6b12" stroke-width=".9" fill="none"/></svg></div>
<div class="cb" style="top:434px"><svg width="8" height="8" viewBox="0 0 8 8"><path d="M1.4 4.2L3.2 6L6.6 2" fill="none" stroke="#2268c4" stroke-width="1.4"/></svg></div>
<svg class="abs" style="left:169px;top:434px" width="8.6" height="9" viewBox="0 0 9 9"><path d="M4.5 .8L5.6 3.3L8.3 3.6L6.3 5.4L6.9 8.1L4.5 6.7L2.1 8.1L2.7 5.4L.7 3.6L3.4 3.3Z" fill="none" stroke="#cfb95c" stroke-width=".95"/></svg>
<div class="td" style="right:954.5px;top:433.5px;font-size:8.2px">10.05.2022</div>
<div class="td" style="right:887.5px;top:433.5px;font-size:8.15px">25.11.2021</div>
<div class="td" style="left:319.6px;top:433.5px;font-size:8.15px">51-00006P</div>
<div class="td" style="left:412.6px;top:433.5px;font-size:8.5px">Duplex Penthouse</div>
<div class="td" style="right:609.0px;top:433.5px;font-size:8.3px">850.000 €</div>
<div class="td" style="right:543.6px;top:433.5px;font-size:8.15px">38.250 €</div>
<div class="td" style="left:663px;top:433.5px;font-size:8.2px;letter-spacing:-.5px">4,5 %</div>
<div class="td" style="right:371.0px;top:433.5px;font-size:8.2px">3.000 € / Week</div>
<div class="td" style="right:277.8px;top:433.5px;font-size:8.5px">3.000 € / Month</div>
<div class="td" style="right:237.0px;top:433.5px;font-size:8.4px">4</div>
<div class="td" style="right:192.0px;top:433.5px;font-size:8.4px">4</div>
<div class="td" style="right:135.4px;top:433.5px;font-size:8.45px">250 m<sup>2</sup></div>
<div class="cb" style="top:457.6px"><svg width="8" height="8" viewBox="0 0 8 8"><path d="M1.4 4.2L3.2 6L6.6 2" fill="none" stroke="#2268c4" stroke-width="1.4"/></svg></div>
<svg class="abs" style="left:169px;top:457.6px" width="8.6" height="9" viewBox="0 0 9 9"><path d="M4.5 .8L5.6 3.3L8.3 3.6L6.3 5.4L6.9 8.1L4.5 6.7L2.1 8.1L2.7 5.4L.7 3.6L3.4 3.3Z" fill="none" stroke="#cfb95c" stroke-width=".95"/></svg>
<div class="td" style="right:954.5px;top:457.1px;font-size:8.2px">05.05.2022</div>
<div class="td" style="right:887.5px;top:457.1px;font-size:8.15px">05.05.2022</div>
<div class="td" style="left:319.6px;top:457.1px;font-size:8.15px">51-00009P</div>
<div class="td" style="left:412.6px;top:457.1px;font-size:8.5px">Villa</div>
<div class="td" style="right:609.0px;top:457.1px;font-size:8.3px">12.000.000 €</div>
<div class="td" style="right:543.6px;top:457.1px;font-size:8.15px">600.000 €</div>
<div class="td" style="left:663px;top:457.1px;font-size:8.2px;letter-spacing:-.5px">5 %</div>
<div class="td" style="right:371.0px;top:457.1px;font-size:8.2px">6.500 € / Week</div>
<div class="td" style="right:237.0px;top:457.1px;font-size:8.4px">8</div>
<div class="td" style="right:192.0px;top:457.1px;font-size:8.4px">10</div>
<div class="td" style="right:135.4px;top:457.1px;font-size:8.45px">1.500 m<sup>2</sup></div>
<div class="td" style="right:80.0px;top:457.1px;font-size:8.45px">5.000 m<sup>2</sup></div>
<div class="tg" style="left:1126.4px;top:458.3px;background:#2b2b2b">E</div>
<div class="tg" style="left:1137.6000000000001px;top:458.3px;background:#0d6b12"><svg width="9" height="9" viewBox="0 0 9 9" style="position:absolute;left:0;top:0"><circle cx="4.5" cy="4.5" r="2.7" fill="#fff"/><path d="M4.5 3V4.6L5.6 5.2" stroke="#0d6b12" stroke-width=".9" fill="none"/></svg></div>
<div class="cb" style="top:481.4px"><svg width="8" height="8" viewBox="0 0 8 8"><path d="M1.4 4.2L3.2 6L6.6 2" fill="none" stroke="#2268c4" stroke-width="1.4"/></svg></div>
<svg class="abs" style="left:169px;top:481.4px" width="8.6" height="9" viewBox="0 0 9 9"><path d="M4.5 .8L5.6 3.3L8.3 3.6L6.3 5.4L6.9 8.1L4.5 6.7L2.1 8.1L2.7 5.4L.7 3.6L3.4 3.3Z" fill="none" stroke="#cfb95c" stroke-width=".95"/></svg>
<div class="td" style="right:954.5px;top:480.9px;font-size:8.2px">27.04.2022</div>
<div class="td" style="right:887.5px;top:480.9px;font-size:8.15px">23.03.2022</div>
<div class="td" style="left:319.6px;top:480.9px;font-size:8.15px">51-00001P</div>
<div class="td" style="left:412.6px;top:480.9px;font-size:8.5px">Villa</div>
<div class="td" style="right:609.0px;top:480.9px;font-size:8.3px">7.500.000 €</div>
<div class="td" style="right:543.6px;top:480.9px;font-size:8.15px">375.000 €</div>
<div class="td" style="left:663px;top:480.9px;font-size:8.2px;letter-spacing:-.5px">5 %</div>
<div class="td" style="right:371.0px;top:480.9px;font-size:8.2px">6.000 € / Week</div>
<div class="td" style="right:237.0px;top:480.9px;font-size:8.4px">5</div>
<div class="td" style="right:192.0px;top:480.9px;font-size:8.4px">8</div>
<div class="td" style="right:135.4px;top:480.9px;font-size:8.45px">1.050 m<sup>2</sup></div>
<div class="td" style="right:80.0px;top:480.9px;font-size:8.45px">3.500 m<sup>2</sup></div>
<div class="tg" style="left:1126.4px;top:482.09999999999997px;background:#0d6b12"><svg width="9" height="9" viewBox="0 0 9 9" style="position:absolute;left:0;top:0"><circle cx="4.5" cy="4.5" r="2.7" fill="#fff"/><path d="M4.5 3V4.6L5.6 5.2" stroke="#0d6b12" stroke-width=".9" fill="none"/></svg></div>
<div class="cb" style="top:505px"><svg width="8" height="8" viewBox="0 0 8 8"><path d="M1.4 4.2L3.2 6L6.6 2" fill="none" stroke="#2268c4" stroke-width="1.4"/></svg></div>
<svg class="abs" style="left:169px;top:505px" width="8.6" height="9" viewBox="0 0 9 9"><path d="M4.5 .8L5.6 3.3L8.3 3.6L6.3 5.4L6.9 8.1L4.5 6.7L2.1 8.1L2.7 5.4L.7 3.6L3.4 3.3Z" fill="none" stroke="#cfb95c" stroke-width=".95"/></svg>
<div class="td" style="right:954.5px;top:504.5px;font-size:8.2px">27.04.2022</div>
<div class="td" style="right:887.5px;top:504.5px;font-size:8.15px">03.11.2021</div>
<div class="td" style="left:319.6px;top:504.5px;font-size:8.15px">51-00002P</div>
<div class="td" style="left:412.6px;top:504.5px;font-size:8.5px">Villa</div>
<div class="td" style="right:609.0px;top:504.5px;font-size:8.3px">11.455.000 €</div>
<div class="td" style="right:543.6px;top:504.5px;font-size:8.15px">572.750 €</div>
<div class="td" style="left:663px;top:504.5px;font-size:8.2px;letter-spacing:-.5px">5 %</div>
<div class="td" style="right:371.0px;top:504.5px;font-size:8.2px">12.000 € / Week</div>
<div class="td" style="right:237.0px;top:504.5px;font-size:8.4px">6</div>
<div class="td" style="right:192.0px;top:504.5px;font-size:8.4px">10</div>
<div class="td" style="right:135.4px;top:504.5px;font-size:8.45px">1.500 m<sup>2</sup></div>
<div class="td" style="right:80.0px;top:504.5px;font-size:8.45px">5.000 m<sup>2</sup></div>
<div class="tg" style="left:1126.4px;top:505.7px;background:#c8701a">!</div>
<div class="tg" style="left:1137.6000000000001px;top:505.7px;background:#2b2b2b">E</div>
<div class="tg" style="left:1148.8000000000002px;top:505.7px;background:#0d6b12"><svg width="9" height="9" viewBox="0 0 9 9" style="position:absolute;left:0;top:0"><circle cx="4.5" cy="4.5" r="2.7" fill="#fff"/><path d="M4.5 3V4.6L5.6 5.2" stroke="#0d6b12" stroke-width=".9" fill="none"/></svg></div>
<div class="cb" style="top:528.8px"><svg width="8" height="8" viewBox="0 0 8 8"><path d="M1.4 4.2L3.2 6L6.6 2" fill="none" stroke="#2268c4" stroke-width="1.4"/></svg></div>
<svg class="abs" style="left:169px;top:528.8px" width="8.6" height="9" viewBox="0 0 9 9"><path d="M4.5 .8L5.6 3.3L8.3 3.6L6.3 5.4L6.9 8.1L4.5 6.7L2.1 8.1L2.7 5.4L.7 3.6L3.4 3.3Z" fill="none" stroke="#cfb95c" stroke-width=".95"/></svg>
<div class="td" style="right:954.5px;top:528.3px;font-size:8.2px">27.04.2022</div>
<div class="td" style="right:887.5px;top:528.3px;font-size:8.15px">10.12.2021</div>
<div class="td" style="left:319.6px;top:528.3px;font-size:8.15px">51-00004P</div>
<div class="td" style="left:412.6px;top:528.3px;font-size:8.5px">Villa</div>
<div class="td" style="right:371.0px;top:528.3px;font-size:8.2px">5.000 € / Week</div>
<div class="td" style="right:237.0px;top:528.3px;font-size:8.4px">4</div>
<div class="td" style="right:192.0px;top:528.3px;font-size:8.4px">6</div>
<div class="td" style="right:135.4px;top:528.3px;font-size:8.45px">750 m<sup>2</sup></div>
<div class="td" style="right:80.0px;top:528.3px;font-size:8.45px">3.000 m<sup>2</sup></div>
<div class="cb" style="top:552.6px"><svg width="8" height="8" viewBox="0 0 8 8"><path d="M1.4 4.2L3.2 6L6.6 2" fill="none" stroke="#2268c4" stroke-width="1.4"/></svg></div>
<svg class="abs" style="left:169px;top:552.6px" width="8.6" height="9" viewBox="0 0 9 9"><path d="M4.5 .8L5.6 3.3L8.3 3.6L6.3 5.4L6.9 8.1L4.5 6.7L2.1 8.1L2.7 5.4L.7 3.6L3.4 3.3Z" fill="none" stroke="#cfb95c" stroke-width=".95"/></svg>
<div class="td" style="right:954.5px;top:552.1px;font-size:8.2px">27.04.2022</div>
<div class="td" style="right:887.5px;top:552.1px;font-size:8.15px">25.03.2022</div>
<div class="td" style="left:319.6px;top:552.1px;font-size:8.15px">51-00011P-DUP</div>
<div class="td" style="left:412.6px;top:552.1px;font-size:8.5px">Penthouse</div>
<div class="td" style="right:609.0px;top:552.1px;font-size:8.3px">685.000 €</div>
<div class="td" style="right:543.6px;top:552.1px;font-size:8.15px">34.250 €</div>
<div class="td" style="left:663px;top:552.1px;font-size:8.2px;letter-spacing:-.5px">5 %</div>
<div class="td" style="right:371.0px;top:552.1px;font-size:8.2px">1.500 € / Week</div>
<div class="td" style="right:237.0px;top:552.1px;font-size:8.4px">3</div>
<div class="td" style="right:192.0px;top:552.1px;font-size:8.4px">4</div>
<div class="td" style="right:135.4px;top:552.1px;font-size:8.45px">200 m<sup>2</sup></div>
<div class="tg" style="left:1126.4px;top:553.3000000000001px;background:#a3142b">S</div>
<div class="tg" style="left:1137.6000000000001px;top:553.3000000000001px;background:#2b2b2b">E</div>
<div class="abs" style="left:156px;top:578.6px;font-size:7.4px;line-height:11px;font-style:italic;color:#777;white-space:nowrap">Showing 1 to 7 of 7 entries</div>

</div>
<div id="tabwrap" style="position:absolute;left:147px;top:32px;width:1043px;height:21px"><div id="tabs">
 <div class="abs" style="left:0;top:-.5px;width:75px;height:21.5px;background:#fff;border-top:1.6px solid #3b87b5;border-right:1px solid #ddd"></div>
 <svg class="abs" style="left:9px;top:6px" width="11" height="11" viewBox="0 0 11 11"><circle cx="4.5" cy="4.5" r="3.4" fill="none" stroke="#333" stroke-width="1.2"/><path d="M7 7L10 10" stroke="#333" stroke-width="1.5"/></svg>
 <div class="abs" style="left:22px;top:6px;font-size:8.3px;line-height:11px;font-weight:bold;color:#333;white-space:nowrap">Results</div>
 <div class="abs" style="left:55px;top:6px;width:11px;height:11px;border-radius:6px;background:#5c7a29;color:#fff;font-size:8px;font-weight:bold;line-height:11px;text-align:center">7</div>
 <svg class="abs" style="left:84px;top:6.5px" width="11" height="8.2" viewBox="0 0 12 9"><path d="M.6 4.5C2.2 1.8 4 .9 6 .9S9.8 1.8 11.4 4.5C9.8 7.2 8 8.1 6 8.1S2.2 7.2 .6 4.5Z" fill="none" stroke="#333" stroke-width="1"/><circle cx="6" cy="4.3" r="2.3" fill="#333"/></svg>
 <div class="abs" style="left:97.5px;top:5px;font-size:8.4px;line-height:11px;color:#666;white-space:nowrap">Details</div>
 <!-- right controls -->
 <div class="tdiv" style="left:860px"></div><div class="tdiv" style="left:922px"></div><div class="tdiv" style="left:984px"></div><div class="tdiv" style="left:1004px"></div><div class="tdiv" style="left:1025px"></div>
 <svg class="abs" style="left:868px;top:5.7px" width="11" height="11" viewBox="0 0 11 11"><path d="M1 10L1.6 7.4L7.6 1.4L9.6 3.4L3.6 9.4Z" fill="#333"/><path d="M8.2.8L10.2 2.8" stroke="#333" stroke-width="1.2"/></svg>
 <div class="abs sw" style="left:886px"></div><div class="abs knob" style="left:885px"></div><div class="abs swt" style="left:898px">OFF</div>
 <svg class="abs" style="left:930px;top:6.5px" width="8" height="9" viewBox="0 0 10 11"><circle cx="5" cy="2.8" r="2.4" fill="#222"/><path d="M.6 10.4V8A2.6 2.6 0 0 1 3.2 5.6H6.8A2.6 2.6 0 0 1 9.4 8V10.4Z" fill="#222"/><rect x="1.6" y="7" width="6.8" height="1" fill="#f7f7f7"/></svg>
 <div class="abs sw" style="left:947px"></div><div class="abs knob" style="left:946px"></div><div class="abs swt" style="left:959px">OFF</div>
 <svg class="abs" style="left:991px;top:6.7px" width="6.5" height="8.5" viewBox="0 0 7 9"><path d="M5.4 1L1.8 4.5L5.4 8" fill="none" stroke="#222" stroke-width="1.5"/></svg>
 <svg class="abs" style="left:1011px;top:6.7px" width="6.5" height="8.5" viewBox="0 0 7 9"><path d="M1.6 1L5.2 4.5L1.6 8" fill="none" stroke="#222" stroke-width="1.5"/></svg>
 <svg class="abs" style="left:1030px;top:6.7px" width="8.5" height="8.5" viewBox="0 0 9 9"><path d="M1.4 7.6L7.6 1.4" stroke="#222" stroke-width="1.2"/><path d="M4.6.8H8.2V4.4ZM.8 4.6V8.2H4.4Z" fill="#222"/></svg>
</div></div>

<!-- scrollbar -->
<div class="abs" style="left:1180.3px;top:53px;width:10.7px;height:545px;background:#f3f3f3"></div>
<div class="abs" style="left:1181px;top:131.3px;width:8px;height:456px;background:#c1c1c1"></div>
<div class="abs" style="left:1183px;top:57px;width:0;height:0;border-left:2.5px solid transparent;border-right:2.5px solid transparent;border-bottom:3px solid #555"></div>
<!-- orange highlight -->
<div class="abs" style="left:139.3px;top:373.8px;width:31.3px;height:204.5px;border:5.2px solid #fd6c37;border-radius:10px"></div>
<!-- green circle + tango banner -->
<div class="abs" style="left:1158px;top:560px;width:40px;height:40px;border-radius:20px;background:rgba(150,215,170,.4)"></div>
<div class="abs" style="left:960.5px;top:567.5px;width:240px;height:39px;background:#e8e8e8"></div>
<div class="abs" id="tango" style="left:975.5px;top:577px;font-size:17.4px;line-height:22px;color:#222;white-space:nowrap;letter-spacing:3.2px">Made with Tango.us</div>
</body></html>
